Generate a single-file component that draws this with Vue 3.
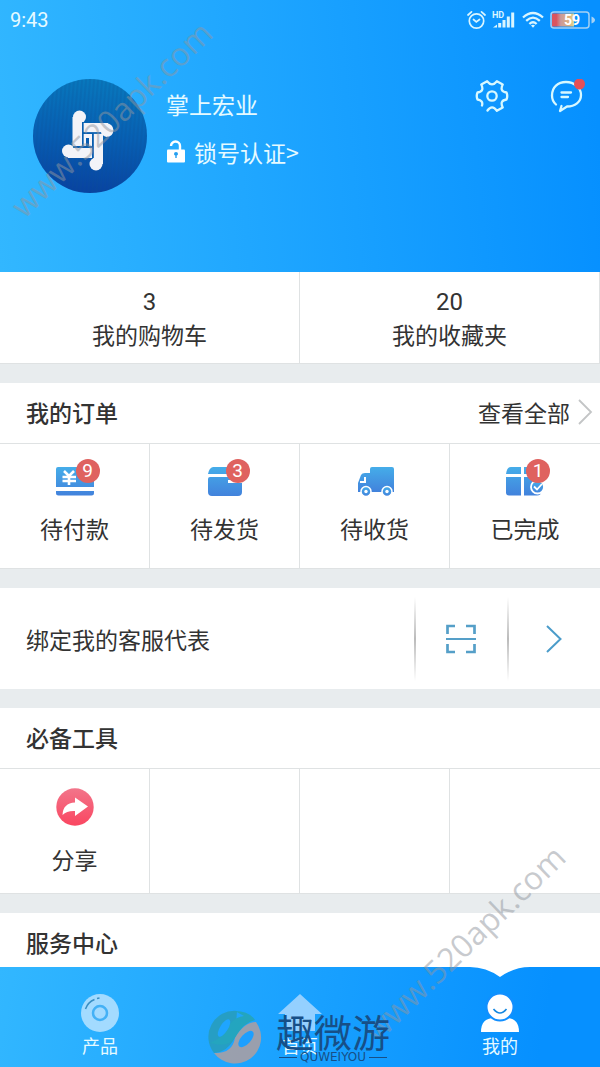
<script setup>
const stats = [
  { count: 3, label: '我的购物车' },
  { count: 20, label: '我的收藏夹' },
]
const orders = [
  { icon: 'pay', label: '待付款', badge: 9 },
  { icon: 'box', label: '待发货', badge: 3 },
  { icon: 'truck', label: '待收货', badge: 0 },
  { icon: 'done', label: '已完成', badge: 1 },
]
</script>

<template>
  <div class="app">
    <svg class="defs" width="0" height="0" aria-hidden="true">
      <defs>
        <linearGradient id="blue" x1="0" y1="0" x2="0" y2="1">
          <stop offset="0" stop-color="#45ade9" />
          <stop offset="1" stop-color="#4282dc" />
        </linearGradient>
        <linearGradient id="pink" x1="0" y1="0" x2="0" y2="1">
          <stop offset="0" stop-color="#f2758a" />
          <stop offset="1" stop-color="#fa4661" />
        </linearGradient>
        <linearGradient id="batt" x1="0" y1="0" x2="1" y2="0">
          <stop offset="0.2" stop-color="#d9545f" />
          <stop offset="0.4" stop-color="#c99a9b" />
          <stop offset="0.8" stop-color="#e2b27a" />
          <stop offset="1" stop-color="#d7d79b" />
        </linearGradient>
      </defs>
    </svg>

    <main class="content">
      <header class="hero">
        <div class="status">
          <span>9:43</span>
          <div class="status-icons">
            <svg width="19" height="20" viewBox="0 0 19 20" fill="none" stroke="#d9f5ff" stroke-width="1.700" stroke-linecap="round">
              <circle cx="9.500" cy="11" r="7.200" />
              <path d="M1 5 L4.500 1.800 M18 5 L14.500 1.800 M6.500 9.500 L9.300 12 L12.500 9.500" />
            </svg>
            <svg width="24" height="20" viewBox="0 0 24 20" fill="#d9f5ff">
              <path d="M1 17.500L5 14.500V17.500ZM6.200 13H9.200V17.500H6.200ZM10.500 10H13.500V17.500H10.500ZM14.800 6.500H17.800V17.500H14.800ZM19.200 2.500H22.200V17.500H19.200Z" />
              <text x="0" y="8" class="hd">HD</text>
            </svg>
            <svg width="22" height="18" viewBox="0 0 22 18" fill="none" stroke="#d9f5ff" stroke-width="2.300">
              <path d="M1 6.500Q11-2.500 21 6.500M4.200 9.800Q11 3.500 17.800 9.800M7.400 13Q11 9.500 14.600 13" />
              <path d="M9 14.500Q11 13 13 14.500L11 16.800Z" fill="#d9f5ff" stroke="none" />
            </svg>
            <svg width="46" height="18" viewBox="0 0 46 18">
              <rect x="2" y="2.500" width="22" height="13" fill="url(#batt)" />
              <rect x="1" y="1" width="38" height="16" rx="3" fill="none" stroke="#a5d1f4" stroke-width="1.500" />
              <path d="M41.500 5.500Q45 7 45 9T41.500 12.500Z" fill="#a5d1f4" />
              <text x="14" y="13.500" class="charge">59</text>
            </svg>
          </div>
        </div>

        <div class="profile">
          <svg class="avatar" viewBox="0 0 114 114" role="img" aria-label="头像">
            <defs>
              <linearGradient id="disc" x1="0.500" y1="0" x2="0.400" y2="1">
                <stop offset="0" stop-color="#0878bd" />
                <stop offset="0.500" stop-color="#075fb3" />
                <stop offset="1" stop-color="#0842a0" />
              </linearGradient>
              <pattern id="weave" width="4" height="4" patternUnits="userSpaceOnUse" patternTransform="rotate(5)">
                <path d="M1 0V4" stroke="#064b91" stroke-width="1" opacity="0.350" />
              </pattern>
            </defs>
            <circle cx="57" cy="57" r="57" fill="url(#disc)" />
            <circle cx="57" cy="57" r="57" fill="url(#weave)" />
            <g fill="#f3f3f8">
              <path d="M39.500 67V38H49V67ZM50.500 44H75V53.500H50.500ZM60.500 54.500H70V85H60.500ZM59 69H35V79H59Z" />
              <circle cx="46.500" cy="38" r="6.500" />
              <path d="M68 44H73Q80 45 80.500 51Q80 58 73.500 58Q69 57 68 53Z" />
              <circle cx="63" cy="85" r="6.500" />
              <circle cx="35.500" cy="72" r="6.500" />
              <path d="M50.500 55H59V67H56V59H53V67H50.500Z" />
            </g>
            <path d="M49.700 43V68M50 54H68M60 54.500V79M40 68.200H60" stroke="#0a5fb0" stroke-width="1.300" fill="none" />
          </svg>
          <div class="who">
            <span>掌上宏业</span>
            <a class="verify" href="#verify">
              <svg width="20" height="24" viewBox="0 0 20 24">
                <path d="M5 6A4.500 4.500 0 0 1 14 6V11" fill="none" stroke="#fff" stroke-width="2.400" />
                <rect x="1" y="9.500" width="18" height="13" rx="1" fill="#fff" />
                <path d="M8 14A2 2 0 0 1 12 14Q12 15 10.700 15.600V18H9.300V15.600Q8 15 8 14" fill="#249ff0" />
              </svg>
              <span>锁号认证&gt;</span>
            </a>
          </div>
          <div class="tools">
            <button type="button" aria-label="设置">
              <svg width="34" height="34" viewBox="0 0 34 34" fill="none" stroke="#d7f8ff" stroke-width="2.300" stroke-linecap="round" stroke-linejoin="round">
                <circle cx="17" cy="17" r="4.700" />
                <path d="M12.500 31.500Q17 25 21.900 31.700L27.700 28.400Q24.300 21.500 31.500 20.500Q33 17 31.500 13.500Q24.300 12.500 27.700 5.600L21.900 2.300Q17 8.500 12.100 2.300L6.300 5.600Q9.700 12.500 2.500 13.500Q1 17 2.500 20.500Q8.500 21.500 7 26.500" />
              </svg>
            </button>
            <button type="button" aria-label="消息">
              <svg width="36" height="34" viewBox="0 0 36 34" fill="none" stroke="#d7f8ff" stroke-width="2.300" stroke-linecap="round" stroke-linejoin="round">
                <path d="M7 25.500Q3 22 3 16.500C3 8 9 3 17 3S32 8.500 32 16C32 23 26 27.500 18 27.500L11 32L12.500 27M12.500 13.500H22M12.500 18H19" />
                <circle cx="30.500" cy="5" r="5.500" fill="#e44f58" stroke="none" />
              </svg>
            </button>
          </div>
        </div>
      </header>

      <section class="stats">
        <a v-for="s in stats" :key="s.label" href="#stats">
          <strong>{{ s.count }}</strong>
          <span>{{ s.label }}</span>
        </a>
      </section>

      <section class="card">
        <div class="card-head">
          <h2>我的订单</h2>
          <a class="all" href="#orders">
            查看全部
            <svg width="16" height="26" viewBox="0 0 16 26" fill="none" stroke="#c3c5c6" stroke-width="1.800"><path d="M2 1L14 13L2 25" /></svg>
          </a>
        </div>
        <div class="grid">
          <a v-for="o in orders" :key="o.icon" class="cell order" href="#order">
            <span class="pic">
              <svg width="38" height="31" viewBox="0 4 38 31" fill="url(#blue)">
                <template v-if="o.icon === 'pay'">
                  <path d="M2 5H36Q38 5 38 7V25H0V7Q0 5 2 5M0 29H38V31Q38 33.500 35.500 33.500H2.500Q0 33.500 0 31Z" />
                  <path d="M8 9L13 14L18 9M13 14V23M6.500 15H20M6.500 19H20" fill="none" stroke="#fff" stroke-width="2.600" />
                </template>
                <template v-else-if="o.icon === 'box'">
                  <path d="M7 5H31L35 12H2Q3 6 7 5M4 15H34Q36 15 36 17V30Q36 34 32 34H6Q2 34 2 30V17Q2 15 4 15" />
                  <path d="M22 18H36V21H22Z" fill="#fff" />
                </template>
                <template v-else-if="o.icon === 'truck'">
                  <path d="M16 5H36Q38 5 38 7V30H2V21L5 13Q6 11 9 11H14V7Q14 5 16 5" />
                  <path d="M9 15V20H4" fill="none" stroke="#fff" stroke-width="2" />
                  <circle cx="10" cy="29.500" r="5" stroke="#fff" stroke-width="1.500" />
                  <circle cx="31" cy="29.500" r="5" stroke="#fff" stroke-width="1.500" />
                  <circle cx="10" cy="29.500" r="1.700" fill="#fff" />
                  <circle cx="31" cy="29.500" r="1.700" fill="#fff" />
                </template>
                <template v-else>
                  <path d="M5 5H15V12H0Q1 5 5 5M18 5H28Q32 6 34 12H18ZM0 15H15V33.500H3Q0 33.500 0 30.500ZM18 15H35V30Q35 33.500 31 33.500H18Z" />
                  <circle cx="31.500" cy="25" r="6.500" stroke="#fff" stroke-width="1.800" />
                  <path d="M28 24.500L31 27.500L36 22" fill="none" stroke="#fff" stroke-width="1.800" />
                </template>
              </svg>
              <b v-if="o.badge" class="badge">{{ o.badge }}</b>
            </span>
            <span>{{ o.label }}</span>
          </a>
        </div>
      </section>

      <section class="card bind">
        <a class="bind-text" href="#bind">绑定我的客服代表</a>
        <button type="button" class="scan" aria-label="扫一扫">
          <svg width="30" height="30" viewBox="0 0 30 30" fill="none" stroke="#559fc8" stroke-width="2.700">
            <path d="M1.500 10V2H9M20 2H28.500V10M28.500 20V28H20M9 28H1.500V20" />
            <path d="M0 15H30" stroke-width="2" />
          </svg>
        </button>
        <button type="button" class="go" aria-label="进入">
          <svg width="18" height="30" viewBox="0 0 18 30" fill="none" stroke="#4b9cca" stroke-width="2"><path d="M2 2L15.500 15L2 28" /></svg>
        </button>
      </section>

      <section class="card">
        <div class="card-head"><h2>必备工具</h2></div>
        <div class="grid">
          <a class="cell" href="#share">
            <span class="pic">
              <svg width="38" height="38" viewBox="0 0 38 38">
                <circle cx="19" cy="19" r="18.700" fill="url(#pink)" />
                <path d="M6.500 27Q7 15 19 14.500V9.500L32 18.500L19 28V23Q11 22.500 6.500 27" fill="#fff" />
              </svg>
            </span>
            <span>分享</span>
          </a>
          <div v-for="n in 3" :key="n" class="cell"></div>
        </div>
      </section>

      <section class="card">
        <div class="card-head"><h2>服务中心</h2></div>
      </section>
    </main>

    <nav class="tabs">
      <a href="#product">
        <svg width="38" height="40" viewBox="0 0 38 40">
          <circle cx="19" cy="20" r="19" fill="#a3dbff" />
          <circle cx="19" cy="20" r="7" fill="none" stroke="#43b1f6" stroke-width="2.500" />
          <path d="M4.500 16Q7 9 13.500 6.500M16 5.500L18.500 5" fill="none" stroke="#398fc4" stroke-width="1.500" />
        </svg>
        <span>产品</span>
      </a>
      <a href="#home">
        <svg width="46" height="40" viewBox="0 0 46 40" fill="#94d0ff"><path d="M23 1L45 21H38V38H8V21H1Z" /></svg>
        <span>首页</span>
      </a>
      <a href="#mine">
        <svg class="notch" width="60" height="10" viewBox="0 0 60 10"><path d="M0 0Q16 0 30 10Q44 0 60 0Z" fill="#fff" /></svg>
        <svg width="38" height="40" viewBox="0 0 38 40" fill="#fff">
          <path d="M0 39Q0 25 13 25H25Q38 25 38 39Z" />
          <circle cx="19" cy="14" r="13.500" stroke="#128fff" stroke-width="2" />
          <path d="M12.500 16Q19 24 25.500 16" fill="none" stroke="#1688e0" stroke-width="1.600" />
        </svg>
        <span>我的</span>
      </a>
    </nav>

    <span class="mark mark-top">www.520apk.com</span>
    <span class="mark mark-bottom">www.520apk.com</span>
    <div class="brand">
      <svg width="54" height="54" viewBox="0 0 54 54" opacity="0.850">
        <path d="M27 27L29 1A26 26 0 0 0 6 43Q20 42 27 27" fill="#289dba" />
        <path d="M27 1Q41 1 47 10Q36 12 27 28Q20 38 2 33Q18 26 22 14Q27 7 36 6Z" fill="#25a5b4" />
        <path d="M27 28Q36 12 48 12A26 26 0 0 1 6 43Q24 44 27 28" fill="#b09f9f" />
        <ellipse cx="16" cy="18" rx="4" ry="10" transform="rotate(32 16 18)" fill="#1fa5ff" />
        <ellipse cx="38" cy="29" rx="5" ry="10" transform="rotate(42 38 29)" fill="#1d9fff" />
      </svg>
      <div class="brand-text">
        <span class="brand-name">趣微游</span>
        <span class="brand-sub">QUWEIYOU</span>
      </div>
    </div>
  </div>
</template>

<style>
body {
  margin: 0;
}
</style>

<style scoped>
.app {
  position: relative;
  display: flex;
  flex-direction: column;
  height: 100vh;
  overflow: hidden;
  background: #e8ecee;
  color: #333;
  font-family: "Noto Sans CJK SC", sans-serif;
  font-size: 23px;
  line-height: 32px;
}
.defs {
  position: absolute;
}
a {
  color: inherit;
  text-decoration: none;
}
button {
  display: flex;
  align-items: center;
  justify-content: center;
  padding: 0;
  border: 0;
  background: none;
}
svg {
  display: block;
  flex: none;
}
.content {
  flex: 1;
  min-height: 0;
  overflow-y: auto;
  scrollbar-width: none;
}
.hero {
  box-sizing: border-box;
  min-height: 272px;
  background: linear-gradient(85deg, #32b7ff 0%, #0690ff 98%);
  color: #e6faff;
}
.status {
  display: flex;
  align-items: center;
  justify-content: space-between;
  height: 40px;
  padding: 0 4px 0 10px;
  font-family: Roboto, sans-serif;
  font-size: 20px;
}
.status-icons {
  display: flex;
  align-items: center;
  gap: 6px;
}
.hd {
  font: bold 9px Roboto, sans-serif;
}
.charge {
  font: bold 14px Roboto, sans-serif;
  fill: #fff;
}
.profile {
  display: flex;
  align-items: flex-start;
  padding: 39px 15px 0 33px;
}
.avatar {
  width: 114px;
  height: 114px;
}
.who {
  display: flex;
  flex: 1;
  flex-direction: column;
  gap: 16px;
  padding: 9px 0 0 19px;
}
.verify {
  display: flex;
  align-items: center;
  gap: 8px;
}
.tools {
  display: flex;
  gap: 40px;
}
.tools button {
  height: 34px;
}
.stats {
  display: flex;
  background: #fff;
  border-bottom: 1px solid #dfe2e3;
}
.stats a {
  display: flex;
  flex: 1;
  flex-direction: column;
  align-items: center;
  padding: 14px 0 13px;
  border-right: 1px solid #dfe2e3;
}
.stats strong {
  font-family: Roboto, sans-serif;
  font-size: 24px;
  font-weight: 400;
}
.card {
  margin-top: 19px;
  background: #fff;
}
.card-head {
  box-sizing: border-box;
  display: flex;
  align-items: center;
  justify-content: space-between;
  height: 60px;
  padding: 0 7px 2px 26px;
}
h2 {
  margin: 0;
  font-size: 23px;
  font-weight: 500;
}
.all {
  display: flex;
  align-items: center;
  gap: 7px;
}
.grid {
  display: grid;
  grid-template-columns: repeat(4, 1fr);
  border-top: 1px solid #dfe2e3;
  border-bottom: 1px solid #dfe2e3;
}
.cell {
  box-sizing: border-box;
  display: flex;
  flex-direction: column;
  align-items: center;
  gap: 17px;
  min-height: 124px;
  padding-top: 19px;
  border-right: 1px solid #dfe2e3;
}
.order {
  gap: 15px;
  padding-top: 22px;
}
.cell:last-child {
  border-right: 0;
}
.pic {
  position: relative;
}
.badge {
  position: absolute;
  top: -7px;
  right: -6px;
  width: 24px;
  height: 24px;
  border-radius: 50%;
  background: #df625f;
  color: #fff;
  font-family: Roboto, sans-serif;
  font-size: 19px;
  font-weight: 400;
  line-height: 24px;
  text-align: center;
}
.bind {
  display: flex;
  align-items: center;
  height: 101px;
  padding-left: 26px;
}
.bind-text {
  flex: 1;
}
.scan,
.go {
  width: 93px;
  height: 84px;
  background: linear-gradient(#fff, #bbb 50%, #fff) left / 2px 100% no-repeat;
}
.tabs {
  display: flex;
  height: 100px;
  background: linear-gradient(100deg, #32b7ff 0%, #0690ff 90%);
  color: #e6faff;
  font-size: 18px;
  line-height: 24px;
}
.tabs a {
  position: relative;
  display: flex;
  flex: 1;
  flex-direction: column;
  align-items: center;
  padding-top: 26px;
}
.notch {
  position: absolute;
  top: 0;
}
.mark {
  position: absolute;
  color: rgba(145, 150, 158, 0.5);
  font-family: "Open Sans", sans-serif;
  font-size: 32px;
  line-height: 40px;
  transform: rotate(-44deg);
  pointer-events: none;
}
.mark-top {
  top: 99px;
  left: -21px;
}
.mark-bottom {
  right: 4px;
  bottom: 104px;
}
.brand {
  position: absolute;
  bottom: 3px;
  left: 50%;
  display: flex;
  align-items: flex-end;
  gap: 14px;
  margin-left: -92px;
  color: #174f87;
  pointer-events: none;
}
.brand-text {
  display: flex;
  flex-direction: column;
  align-items: center;
}
.brand-name {
  font-size: 38px;
  font-weight: 400;
  line-height: 38px;
}
.brand-sub {
  display: flex;
  align-items: center;
  gap: 3px;
  font-family: "DejaVu Sans", sans-serif;
  font-size: 12px;
  line-height: 14px;
}
.brand-sub::before,
.brand-sub::after {
  width: 18px;
  height: 1px;
  background: #174f87;
  content: "";
}
</style>
